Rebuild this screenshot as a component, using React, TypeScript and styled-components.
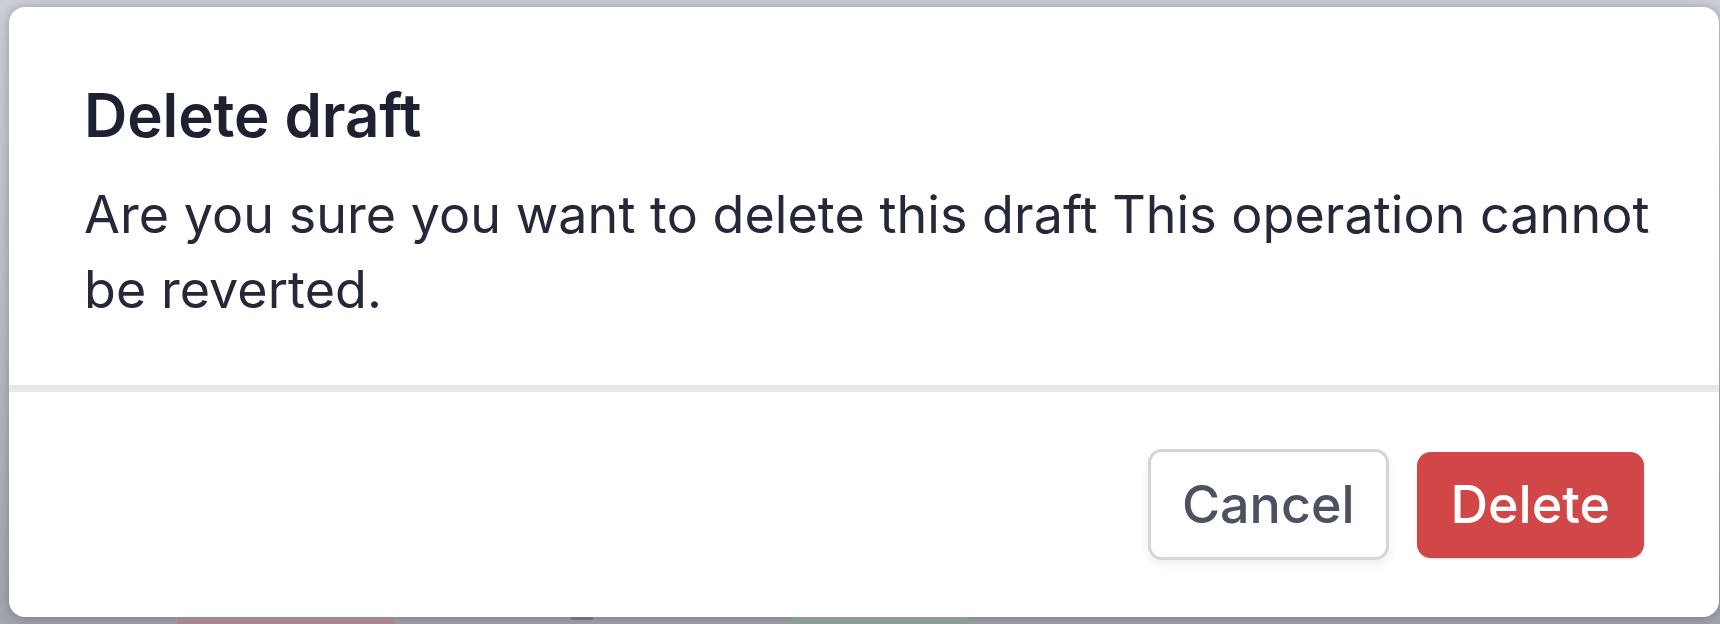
import React from "react";
import styled, { createGlobalStyle } from "styled-components";

const GlobalStyle = createGlobalStyle`
  html, body {
    margin: 0;
    padding: 0;
    width: 1720px;
    height: 624px;
    overflow: hidden;
  }
  body {
    font-family: Inter, "Noto Sans", "Liberation Sans", sans-serif;
    -webkit-font-smoothing: antialiased;
  }
  * { box-sizing: border-box; }
`;

const Backdrop = styled.div`
  width: 1720px;
  height: 624px;
  display: flex;
  flex-direction: column;
  padding: 7px 1px 0 9px;
  background: linear-gradient(180deg, #cdd0d9 0%, #bfc2ca 45%, #a4a7ae 100%);
`;

const Dialog = styled.div`
  width: 1710px;
  height: 610px;
  flex: none;
  display: flex;
  flex-direction: column;
  background: #ffffff;
  border-radius: 16px;
  box-shadow: 0 0 10px rgba(30, 35, 50, 0.22), 0 6px 18px rgba(30, 35, 50, 0.12);
  overflow: hidden;
`;

const Header = styled.div`
  padding: 72px 56px 58px 75px;
  border-bottom: 7px solid #e6e7eb;
`;

const Title = styled.h2`
  margin: 0;
  font-size: 60px;
  line-height: 72px;
  font-weight: 580;
  color: #1e2132;
  letter-spacing: -0.1px;
`;

const Message = styled.p`
  margin: 26px 0 0 0;
  font-size: 52px;
  line-height: 75px;
  font-weight: 400;
  color: #242838;
  letter-spacing: 0.05px;
`;

const Footer = styled.div`
  flex: 1;
  display: flex;
  justify-content: flex-end;
  align-items: center;
  gap: 28px;
  padding: 0 75px;
`;

const Button = styled.button<{ $variant: "secondary" | "danger" }>`
  font-family: inherit;
  font-size: 52px;
  font-weight: 500;
  line-height: 1;
  display: inline-flex;
  align-items: center;
  justify-content: center;
  border-radius: 14px;
  cursor: pointer;
  height: ${(p) => (p.$variant === "secondary" ? "111px" : "106px")};
  padding: 0 ${(p) => (p.$variant === "secondary" ? "31px" : "34px")};
  border: ${(p) => (p.$variant === "secondary" ? "3px solid #d3d5da" : "none")};
  background: ${(p) => (p.$variant === "secondary" ? "#ffffff" : "#d14646")};
  color: ${(p) => (p.$variant === "secondary" ? "#4d5261" : "#ffffff")};
  box-shadow: ${(p) =>
    p.$variant === "secondary"
      ? "0 5px 10px rgba(20, 25, 40, 0.07)"
      : "0 1px 2px rgba(120, 20, 20, 0.15)"};
`;

const Strip = styled.div`
  flex: 1;
  display: flex;
  align-items: stretch;
`;

const Chip = styled.div<{ $color: string; $w: number; $ml: number; $h?: number }>`
  width: ${(p) => p.$w}px;
  margin-left: ${(p) => p.$ml}px;
  height: ${(p) => (p.$h ? `${p.$h}px` : "auto")};
  background: ${(p) => p.$color};
`;

export default function App() {
  return (
    <>
      <GlobalStyle />
      <Backdrop>
        <Dialog role="dialog" aria-labelledby="dlg-title">
          <Header>
            <Title id="dlg-title">Delete draft</Title>
            <Message>
              Are you sure you want to delete this draft This operation cannot
              be reverted.
            </Message>
          </Header>
          <Footer>
            <Button $variant="secondary">Cancel</Button>
            <Button $variant="danger">Delete</Button>
          </Footer>
        </Dialog>
        <Strip>
          <Chip $color="#a3898f" $w={218} $ml={168} />
          <Chip $color="#6d717a" $w={22} $ml={176} $h={3} />
          <Chip $color="#8aa093" $w={175} $ml={200} />
        </Strip>
      </Backdrop>
    </>
  );
}
